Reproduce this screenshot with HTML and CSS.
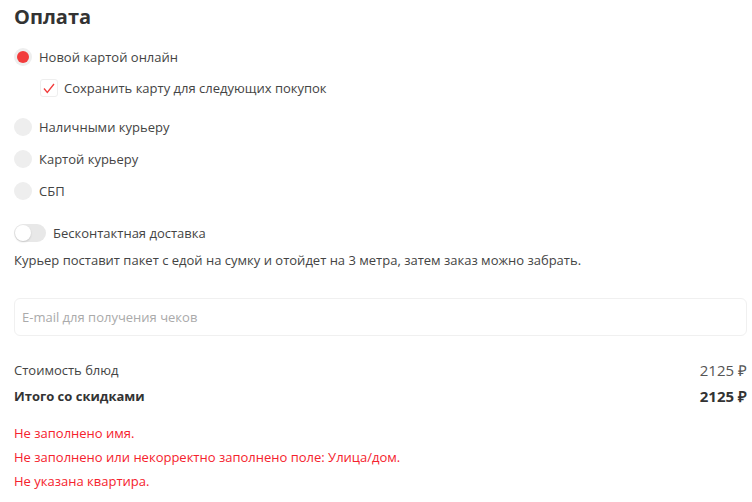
FILE: index.html
```html
<!DOCTYPE html>
<html lang="ru">
<head>
<meta charset="utf-8">
<link rel="stylesheet" href="styles.css">
</head>
<body>
<div class="page">
  <h2 class="title">Оплата</h2>
  <div class="options">
    <div class="radio-row">
      <span class="radio checked"></span><span class="label">Новой картой онлайн</span>
    </div>
    <div class="check-row">
      <span class="checkbox"><svg width="12" height="11" viewBox="0 0 12 11"><path d="M1 5.5 L4.3 9.4 L11 1" fill="none" stroke="#f23b3b" stroke-width="1.3"/></svg></span><span class="label">Сохранить карту для следующих покупок</span>
    </div>
    <div class="radio-row gap-top">
      <span class="radio"></span><span class="label">Наличными курьеру</span>
    </div>
    <div class="radio-row">
      <span class="radio"></span><span class="label">Картой курьеру</span>
    </div>
    <div class="radio-row">
      <span class="radio"></span><span class="label">СБП</span>
    </div>
  </div>
  <div class="toggle-row">
    <span class="toggle"><span class="knob"></span></span><span class="label">Бесконтактная доставка</span>
  </div>
  <p class="desc">Курьер поставит пакет с едой на сумку и отойдет на 3 метра, затем заказ можно забрать.</p>
  <div class="input">E-mail для получения чеков</div>
  <div class="summary">
    <div class="sum-row"><span>Стоимость блюд</span><span class="price">2125 ₽</span></div>
    <div class="sum-row total"><span>Итого со скидками</span><span>2125 ₽</span></div>
  </div>
  <div class="errors">
    <div>Не заполнено имя.</div>
    <div>Не заполнено или некорректно заполнено поле: Улица/дом.</div>
    <div>Не указана квартира.</div>
  </div>
</div>
</body>
</html>
```

FILE: styles.css
```css
* { box-sizing: border-box; }
html, body { margin: 0; background: #fff; }
body { font-family: "Open Sans", "Liberation Sans", sans-serif; color: #444; font-size: 13px; }
.page { padding: 4px 5px 0 14px; }
.title { margin: 0; font-size: 20px; font-weight: 700; color: #333; line-height: 26px; }
.options { margin-top: 11px; }
.radio-row { display: flex; align-items: center; height: 32px; }
.gap-top { margin-top: 8px; }
.radio { width: 18px; height: 18px; border-radius: 50%; background: #eeeeee; display: flex; align-items: center; justify-content: center; margin-right: 7px; }
.radio.checked::after { content: ""; width: 12px; height: 12px; border-radius: 50%; background: #f23b3b; }
.check-row { display: flex; align-items: center; height: 30px; padding-left: 26px; }
.checkbox { width: 18px; height: 18px; border: 1px solid #eee; border-radius: 3px; display: flex; align-items: center; justify-content: center; margin-right: 6px; }
.toggle-row { display: flex; align-items: center; margin-top: 16px; height: 20px; }
.toggle { width: 32px; height: 18px; border-radius: 9px; background: #e8e8e8; position: relative; margin-right: 7px; }
.knob { position: absolute; left: 1px; top: 1px; width: 16px; height: 16px; border-radius: 50%; background: #fff; box-shadow: 0 1px 2px rgba(0,0,0,0.15); }
.desc { margin: 8px 0 0; line-height: 18px; }
.input { margin-top: 29px; height: 38px; border: 1px solid #f0f0f0; border-radius: 6px; padding: 0 7px; display: flex; align-items: center; color: #aaa; }
.summary { margin-top: 21px; }
.sum-row { display: flex; justify-content: space-between; height: 26px; align-items: center; }
.sum-row .price { font-size: 15px; color: #555; }
.total { font-weight: 700; color: #333; }
.total span:last-child { font-size: 15px; }
.errors { margin-top: 12px; color: #f5222d; }
.errors div { height: 24px; display: flex; align-items: center; }
```
